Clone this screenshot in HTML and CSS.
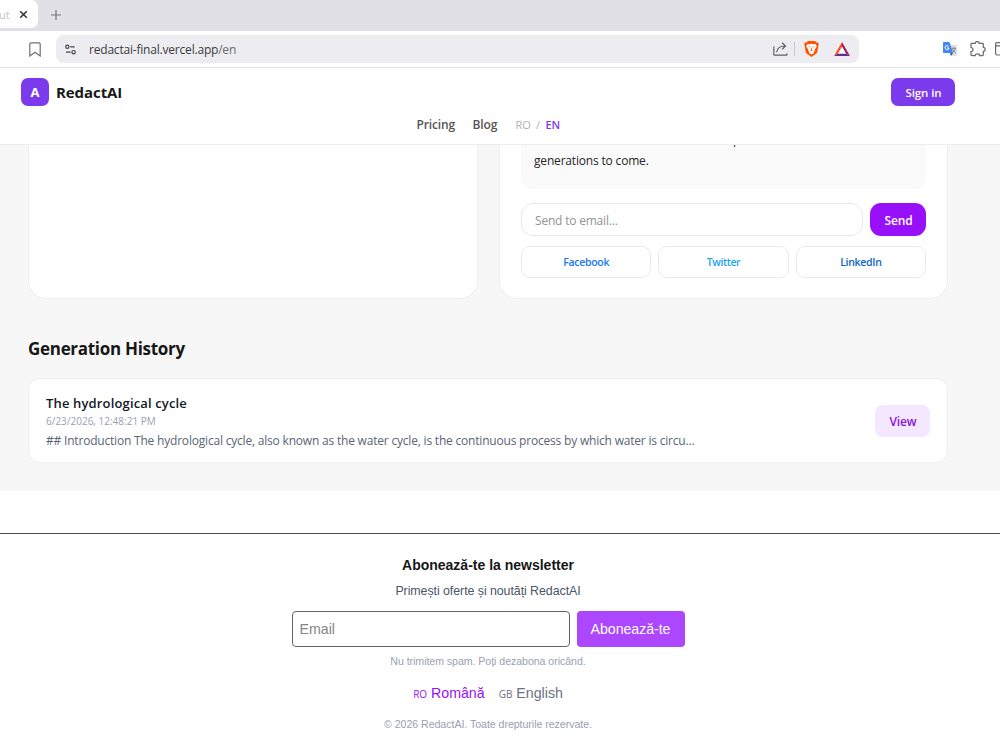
FILE: index.html
```html
<!DOCTYPE html>
<html lang="en">
<head>
<meta charset="utf-8">
<title>RedactAI</title>
<link rel="stylesheet" href="styles.css">
</head>
<body>
<div class="tabs">
  <div class="tab"><span class="tab-title">ut</span>
    <svg width="9" height="9" viewBox="0 0 9 9"><path d="M1.2 1.2l6.6 6.6M7.8 1.2L1.2 7.8" stroke="#333" stroke-width="1.5"/></svg>
  </div>
  <svg class="plus" width="10" height="10" viewBox="0 0 10 10"><path d="M5 0v10M0 5h10" stroke="#77777b" stroke-width="1.2"/></svg>
</div>
<div class="toolbar">
  <svg class="bookmark" width="12" height="15" viewBox="0 0 12 15"><path d="M2 .8h8a1.2 1.2 0 0 1 1.2 1.2v12L6 10.2.8 14V2A1.2 1.2 0 0 1 2 .8z" fill="none" stroke="#707074" stroke-width="1.2"/></svg>
  <div class="address">
    <svg class="tune" width="11" height="11" viewBox="0 0 11 11" fill="none" stroke="#47474b" stroke-width="1.2"><circle cx="2.3" cy="2.8" r="1.6"/><path d="M5.2 2.8h4.5M1 8.2h4.6"/><circle cx="8.6" cy="8.2" r="1.7"/></svg>
    <span class="url">redactai-final.vercel.app<i>/en</i></span>
    <svg class="share" width="15" height="14" viewBox="0 0 15 14" fill="none" stroke="#606064" stroke-width="1.2"><path d="M.8 4.4v8.1q0 .7.7.7h11.7q.7 0 .7-.8v-1.1M3.7 10.2C4 6.1 6.2 4 12.2 4M9.1.8l3.4 3.2-3.4 3.2"/></svg>
    <span class="divider"></span>
    <svg class="brave" width="15" height="16" viewBox="0 0 15 16"><path d="M4 0h7l1.5 1.6 1.6-.1.7 2.1-.5 1.1-1 6.2q-.3 1.1-1.3 1.9L7.5 16 3 12.8q-1-.8-1.3-1.9L.7 4.7.2 3.6l.7-2.1 1.6.1z" fill="#ff5000"/><path d="M3.8 2.9l2.1.3 1.6-.4 1.6.4 2.1-.3 1.5 1.8-.4 1.9-1.6 2 .2 1.5-1.6.8.8 1-2.6 1.7-2.6-1.7.8-1-1.6-.8.2-1.5-1.6-2-.4-1.9z" fill="#fff"/><path d="M4.4 5.2l2.2.5-.7.8zM10.6 5.2l-2.2.5.7.8zM7.1 6.8h.8v2l1 .6-1.4.7-1.4-.7 1-.6z" fill="#ff5000"/></svg>
    <svg class="bat" width="16" height="14" viewBox="0 0 16 14"><path d="M8 0L0 14l4.1-2.6L8 4.8z" fill="#ff4724"/><path d="M8 0l8 14-4.1-2.6L8 4.8z" fill="#9e1f63"/><path d="M0 14h16l-4.1-2.6H4.1z" fill="#662d91"/><path d="M8 4.8l3.9 6.6H4.1z" fill="#fff"/></svg>
  </div>
  <svg class="translate" width="14" height="14" viewBox="0 0 14 14"><path d="M5 3h8.2q.7 0 .7.7v9.4q0 .7-.7.7H8z" fill="#dedee0"/><path d="M.8 0h5.7l3.6 11H.8Q0 11 0 10.2V.8Q0 0 .8 0z" fill="#4688f1"/><path d="M7 11h3.1l-2.2 2.9z" fill="#2457c5"/><path d="M5.6 4.4A2 2 0 1 0 6 6H4.1" fill="none" stroke="#fff" stroke-width="1"/><path d="M8.5 6.3h4.7M10.8 5.2v1.1M12.3 6.3q-.8 3-3.1 4.4M9.4 7.3q1 2.4 3.3 3.6" fill="none" stroke="#737b83" stroke-width=".9"/></svg>
  <svg class="puzzle" width="16" height="16" viewBox="0 0 16 16"><path d="M1 3.1q0-.7.8-.7h3.4C5.2-.1 9.3-.1 9.3 2.4h3.2q.8 0 .8.8v3.1c2.5 0 2.5 4 0 4v3.5q0 .8-.8.8H9.6c0-2.2-4.4-2.2-4.4 0H1.8q-.8 0-.8-.8v-3.1c2.6 0 2.6-4.2 0-4.2z" fill="none" stroke="#68686c" stroke-width="1.2"/></svg>
  <svg class="panel" width="15" height="14" viewBox="0 0 15 14"><path d="M2 .6h13M2 .6Q.6.6.6 2v9.5q0 1.5 1.4 1.5h13M.6 3.8H15" fill="none" stroke="#68686c" stroke-width="1.2"/></svg>
</div>

<header class="site-header">
  <div class="brand-row">
    <div class="brand"><span class="logo">A</span><span class="brand-name">RedactAI</span></div>
    <button class="sign-in"><span>Sign in</span></button>
  </div>
  <nav class="nav"><span class="pricing">Pricing</span><span class="blog">Blog</span><span class="ro">RO</span><span class="slash">/</span><span class="en">EN</span></nav>
</header>

<main class="main">
  <div class="columns">
    <section class="card"></section>
    <section class="card result">
      <div class="preview"><p class="clipped">p</p><p class="last-line">generations to come.</p></div>
      <div class="send-row"><div class="send-input"><span>Send to email...</span></div><button class="send"><span>Send</span></button></div>
      <div class="socials">
        <button class="fb"><span>Facebook</span></button><button class="tw"><span>Twitter</span></button><button class="li"><span>LinkedIn</span></button>
      </div>
    </section>
  </div>
  <h2 class="history-title"><span>Generation History</span></h2>
  <article class="history">
    <div>
      <h3 class="item-title"><span>The hydrological cycle</span></h3>
      <p class="date"><span>6/23/2026, 12:48:21 PM</span></p>
      <p class="excerpt"><span>## Introduction The hydrological cycle, also known as the water cycle, is the continuous process by which water is circu...</span></p>
    </div>
    <button class="view"><span>View</span></button>
  </article>
</main>

<footer class="footer">
  <h4 class="news-title"><span>Abonează-te la newsletter</span></h4>
  <p class="news-sub"><span>Primești oferte și noutăți RedactAI</span></p>
  <div class="news-form"><div class="email"><span>Email</span></div><button class="subscribe"><span>Abonează-te</span></button></div>
  <p class="spam"><span>Nu trimitem spam. Poți dezabona oricând.</span></p>
  <div class="langs"><span class="lang active"><small>RO</small> Română</span><span class="lang"><small>GB</small> English</span></div>
  <p class="copy"><span>© 2026 RedactAI. Toate drepturile rezervate.</span></p>
</footer>
</body>
</html>
```
FILE: styles.css
```css
* { box-sizing: border-box; }
body { margin: 0; width: 1000px; height: 750px; overflow: hidden; background: #fff; font-family: "Open Sans", "Noto Sans", sans-serif; display: flex; flex-direction: column; }
h2, h3, h4, p { margin: 0; font-weight: 400; }
button { border: 0; padding: 0; font-family: inherit; display: flex; align-items: center; justify-content: center; }
span { white-space: nowrap; }
svg { flex: none; display: block; }

.tabs { height: 31px; flex: none; background: #e1e0e6; display: flex; align-items: flex-start; }
.tab { width: 38px; height: 28px; background: #fff; border-radius: 0 7px 7px 0; display: flex; align-items: center; padding-top: 1px; }
.tab-title { width: 19px; font-size: 11px; color: #c4c4c8; overflow: hidden; text-indent: -1px; }
.plus { margin: 10px 0 0 13px; }
.toolbar { height: 37px; flex: none; border-bottom: 1px solid #e5e5e8; display: flex; align-items: center; overflow: hidden; }
.bookmark { margin-left: 29px; }
.address { flex: none; width: 803px; height: 28px; margin-left: 15px; background: #edecf1; border-radius: 8px; display: flex; align-items: center; }
.tune { margin-left: 9px; }
.url { width: 684px; flex: none; margin-left: 13px; font-size: 12px; letter-spacing: -.2px; color: #3c3c40; }
.url i { font-style: normal; color: #6a6a6f; }
.divider { width: 1px; height: 14px; background: #c9c8ce; margin-left: 6px; }
.brave { margin-left: 9px; }
.bat { margin-left: 15px; }
.translate { margin-left: 84px; }
.puzzle { margin-left: 13px; }
.panel { margin-left: 9px; }

.site-header { height: 77px; flex: none; border-bottom: 1px solid #ededed; }
.brand-row { display: flex; justify-content: space-between; padding: 10px 45px 0 21px; }
.brand { display: flex; align-items: center; gap: 7px; }
.logo { width: 28px; height: 28px; border-radius: 7px; background: #7c3aed; color: #fff; font-weight: 700; font-size: 13px; line-height: 28px; text-align: center; }
.brand-name { font-weight: 700; font-size: 15px; letter-spacing: -.08px; color: #171717; }
.sign-in { width: 64px; height: 28px; border-radius: 7px; background: #7c3aed; color: #fff; font-weight: 600; font-size: 11.5px; letter-spacing: -.1px; padding: 1px 0 0 1px; }
.nav { height: 18px; margin-top: 9px; padding-left: 416.5px; display: flex; align-items: center; font-size: 12px; letter-spacing: -.15px; font-weight: 600; color: #555; }
.pricing { width: 56px; }
.blog { width: 43px; }
.ro, .slash, .en { font-size: 11px; font-weight: 400; color: #b0b0b0; }
.ro { width: 20.5px; }
.slash { width: 9.5px; }
.nav .en { color: #7c3aed; font-weight: 600; }

.main { height: 346px; flex: none; background: #f7f7f7; padding: 0 52px 0 28px; }
.columns { display: grid; grid-template-columns: 450px 449px; gap: 21px; height: 154px; }
.card { background: #fff; border: 1px solid #efefef; border-top: 0; border-radius: 0 0 18px 18px; }
.result { padding: 0 21px; }
.preview { height: 44px; background: #fafafa; border-radius: 0 0 11px 11px; padding-left: 13px; overflow: hidden; font-size: 12px; letter-spacing: -.18px; color: #262626; }
.clipped { margin-top: -17px; padding-left: 199px; height: 22px; line-height: 23px; }
.last-line { line-height: 22px; }
.send-row { display: flex; gap: 7px; margin-top: 14px; }
.send-input { width: 343px; height: 33px; border: 1px solid #e8e8e8; border-radius: 12px; display: flex; align-items: center; padding: 1px 0 0 13px; font-size: 12px; letter-spacing: -.2px; color: #929292; }
.send { width: 56px; height: 33px; border-radius: 11px; background: #9810fa; color: #fff; font-weight: 600; font-size: 12px; letter-spacing: -.1px; padding: 1px 0 0 1px; }
.socials { display: grid; grid-template-columns: repeat(3, 1fr); gap: 7px; margin-top: 10px; }
.socials button { height: 32px; border: 1px solid #eaeaea; border-radius: 9px; background: #fff; font-size: 10.5px; letter-spacing: -.3px; font-weight: 600; }
.socials .fb { color: #1877f2; }
.socials .tw { color: #1da1f2; letter-spacing: -.4px; }
.socials .li { color: #0a66c2; }
.history-title { margin-top: 37px; height: 26px; line-height: 26px; font-size: 17px; letter-spacing: -.3px; font-weight: 700; color: #171717; }
.history { height: 85px; margin-top: 16px; background: #fff; border: 1px solid #efefef; border-radius: 12px; display: flex; justify-content: space-between; padding: 16px 17px 0; }
.item-title { height: 18px; line-height: 17px; font-size: 13px; letter-spacing: .15px; font-weight: 600; color: #101828; }
.date { height: 16px; line-height: 16px; font-size: 10px; color: #99a1af; }
.excerpt { height: 22px; line-height: 24px; font-size: 12px; letter-spacing: -.198px; color: #5a6472; }
.view { width: 55px; height: 32px; margin-top: 10px; border-radius: 8px; background: #f3e8ff; color: #8b10dc; font-size: 12px; letter-spacing: -.15px; font-weight: 600; padding: 1px 0 0 1px; }

.footer { margin-top: 42px; flex: 1; border-top: 1px solid #4b4b4d; padding: 22px 24px 0 0; text-align: center; font-family: "Liberation Sans", Arial, sans-serif; }
.news-title { height: 18px; line-height: 18px; font-size: 14px; font-weight: 700; color: #171717; }
.news-sub { height: 18px; line-height: 18px; margin-top: 8px; font-size: 12.4px; letter-spacing: -.06px; color: #4a5565; }
.news-form { display: flex; justify-content: center; gap: 7px; margin-top: 11px; }
.email { width: 278px; height: 36px; border: 1px solid #626262; border-radius: 4px; padding-left: 7px; display: flex; align-items: center; font-size: 14.2px; color: #858585; }
.subscribe { width: 108px; height: 36px; border-radius: 4px; background: #ad46ff; color: #fff; font-size: 14.2px; letter-spacing: -.05px; }
.spam { height: 16px; line-height: 16px; margin-top: 6px; font-size: 10.6px; letter-spacing: -.05px; color: #99a1af; }
.langs { display: flex; justify-content: center; gap: 14px; height: 20px; line-height: 20px; margin-top: 14px; font-size: 14.2px; color: #6a7282; }
.lang small { font-family: "Open Sans", sans-serif; font-size: 10px; font-weight: 500; }
.lang.active { color: #9810fa; }
.copy { height: 16px; line-height: 16px; margin-top: 13px; font-size: 10.6px; letter-spacing: -.04px; color: #99a1af; }
```
